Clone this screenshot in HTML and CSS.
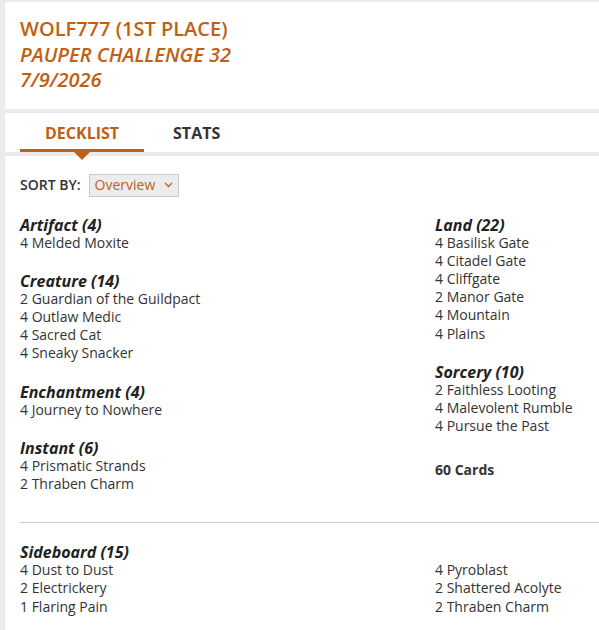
FILE: index.html
```html
<!DOCTYPE html>
<html lang="en">
<head>
    <meta charset="UTF-8">
    <meta name="viewport" content="width=device-width, initial-scale=1.0">
    <title>Wolf777 - Pauper Challenge 32</title>
    <link rel="stylesheet" href="styles.css">
</head>
<body>
    <div class="page">
        <!-- Deck header -->
        <div class="panel deck-header">
            <h1 class="deck-title">Wolf777 (1st Place)</h1>
            <div class="deck-event">Pauper Challenge 32</div>
            <div class="deck-event">7/9/2026</div>
        </div>

        <!-- Tabs -->
        <div class="panel tabs">
            <div class="tab active">Decklist</div>
            <div class="tab">Stats</div>
        </div>

        <!-- Deck list -->
        <div class="panel deck">
            <div class="sort-row">
                <span class="sort-label">Sort by:</span>
                <div class="sort-select">
                    Overview
                    <svg width="9" height="6" viewBox="0 0 9 6"><path d="M1 1l3.5 3.5L8 1" fill="none" stroke="#c06014" stroke-width="1.3"/></svg>
                </div>
            </div>

            <div class="columns">
                <div class="column">
                    <div class="group">
                        <h3>Artifact (4)</h3>
                        <div>4 Melded Moxite</div>
                    </div>
                    <div class="group">
                        <h3>Creature (14)</h3>
                        <div>2 Guardian of the Guildpact</div>
                        <div>4 Outlaw Medic</div>
                        <div>4 Sacred Cat</div>
                        <div>4 Sneaky Snacker</div>
                    </div>
                    <div class="group">
                        <h3>Enchantment (4)</h3>
                        <div>4 Journey to Nowhere</div>
                    </div>
                    <div class="group">
                        <h3>Instant (6)</h3>
                        <div>4 Prismatic Strands</div>
                        <div>2 Thraben Charm</div>
                    </div>
                </div>
                <div class="column">
                    <div class="group">
                        <h3>Land (22)</h3>
                        <div>4 Basilisk Gate</div>
                        <div>4 Citadel Gate</div>
                        <div>4 Cliffgate</div>
                        <div>2 Manor Gate</div>
                        <div>4 Mountain</div>
                        <div>4 Plains</div>
                    </div>
                    <div class="group">
                        <h3>Sorcery (10)</h3>
                        <div>2 Faithless Looting</div>
                        <div>4 Malevolent Rumble</div>
                        <div>4 Pursue the Past</div>
                    </div>
                    <div class="total">60 Cards</div>
                </div>
            </div>

            <hr class="divider">

            <div class="sideboard">
                <h3>Sideboard (15)</h3>
                <div class="columns">
                    <div class="column">
                        <div>4 Dust to Dust</div>
                        <div>2 Electrickery</div>
                        <div>1 Flaring Pain</div>
                    </div>
                    <div class="column">
                        <div>4 Pyroblast</div>
                        <div>2 Shattered Acolyte</div>
                        <div>2 Thraben Charm</div>
                    </div>
                </div>
            </div>
        </div>
    </div>
</body>
</html>
```

FILE: styles.css
```css
body, html {
    margin: 0;
    background-color: #ebebeb;
    font-family: "Open Sans", Arial, sans-serif;
    color: #333;
}

.page {
    padding: 2px 0 0 5px;
    display: flex;
    flex-direction: column;
    gap: 4px;
}

.panel {
    background-color: #fff;
}

.deck-header {
    padding: 14px 15px 16px;
    color: #c06014;
    font-size: 20px;
    line-height: 25.5px;
}

.deck-title {
    margin: 0;
    font-size: 20px;
    font-weight: 600;
    text-transform: uppercase;
}

.deck-event {
    font-style: italic;
    font-weight: 600;
    text-transform: uppercase;
}

.tabs {
    display: flex;
    height: 39px;
    padding-left: 15px;
}

.tab {
    position: relative;
    padding: 0 25px;
    line-height: 41px;
    font-size: 16px;
    font-weight: 700;
    text-transform: uppercase;
    color: #333;
}

.tab.active {
    color: #c06014;
    border-bottom: 3px solid #c06014;
    height: 36px;
    margin-right: 4px;
}

.tab.active::after {
    content: "";
    position: absolute;
    left: 50%;
    bottom: -11px;
    margin-left: -8px;
    border-left: 8px solid transparent;
    border-right: 8px solid transparent;
    border-top: 8px solid #c06014;
}

.deck {
    padding: 18px 0 14px 15px;
    font-size: 14px;
    line-height: 18.2px;
}

.sort-row {
    display: flex;
    align-items: center;
    gap: 8px;
}

.sort-label {
    font-weight: 600;
    text-transform: uppercase;
}

.sort-select {
    display: flex;
    align-items: center;
    gap: 9px;
    height: 21px;
    padding: 0 5px;
    background-color: #ececec;
    border: 1px solid #c8c8c8;
    color: #c06014;
    font-size: 14px;
}

.columns {
    display: grid;
    grid-template-columns: 415px 1fr;
}

.deck > .columns {
    margin-top: 19px;
}

.group {
    margin-bottom: 20px;
}

.column > .group:last-child {
    margin-bottom: 0;
}

h3 {
    margin: 0;
    font-size: 16px;
    line-height: 18px;
    font-style: italic;
    font-weight: 700;
    color: #222;
}

.total {
    margin-top: 26px;
    font-weight: 700;
}

.divider {
    border: none;
    border-top: 1px solid #ccc;
    margin: 29px 0 20px;
}
```
